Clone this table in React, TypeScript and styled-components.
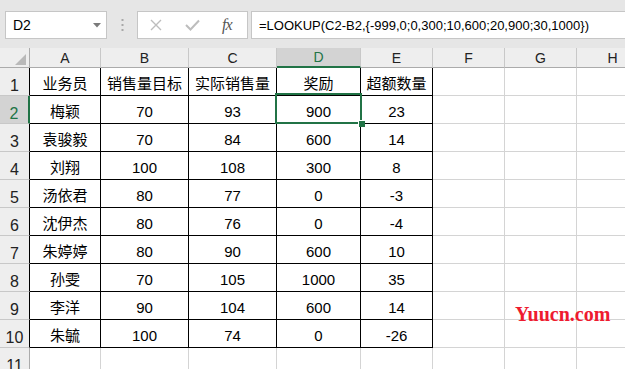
import styled, { createGlobalStyle } from "styled-components";

const GlobalStyle = createGlobalStyle`
  body {
    margin: 0;
    background: #ffffff;
    overflow: hidden;
  }
`;

const Window = styled.div`
  position: relative;
  width: 625px;
  height: 369px;
  overflow: hidden;
  font-family: "Liberation Sans", "Noto Sans CJK SC", sans-serif;
  color: #000;
`;

const FormulaBar = styled.div`
  display: flex;
  align-items: flex-start;
  height: 48px;
  box-sizing: border-box;
  padding: 11px 0 0 5px;
  background: #e6e6e6;
`;

const Field = styled.div`
  display: flex;
  align-items: center;
  height: 28px;
  box-sizing: border-box;
  background: #fff;
  border: 1px solid #c6c6c6;
`;

const NameBox = styled(Field)`
  width: 102px;
  justify-content: space-between;
  padding: 0 5px 0 7px;
  font-size: 14px;
`;

const Grip = styled.div`
  display: flex;
  justify-content: center;
  align-items: center;
  width: 30px;
  height: 28px;
`;

const FxButtons = styled(Field)`
  width: 111px;
  padding: 0 0 0 12px;
`;

const FxIcon = styled.span`
  font-family: "Liberation Serif", serif;
  font-style: italic;
  font-size: 16px;
  color: #555;
  margin-left: 22px;
  letter-spacing: -1px;
`;

const FormulaInput = styled(Field)`
  flex: 1;
  margin-left: 3px;
  border-right: 0;
  padding-left: 7px;
  font-size: 13px;
  white-space: nowrap;
`;

const Sheet = styled.div`
  position: relative;
  display: grid;
  grid-template-columns: 30px 71px 88px 88px 84px 72px 72px 72px 72px;
  grid-template-rows: 20px repeat(11, 28px);
  width: 648px;
`;

const Corner = styled.div`
  display: flex;
  align-items: flex-end;
  justify-content: flex-end;
  padding: 0 3px 2px 0;
  box-sizing: border-box;
  background: #eeeeee;
  border-right: 1px solid #ababab;
  border-bottom: 1px solid #ababab;
`;

const ColHead = styled.div<{ $active?: boolean }>`
  display: flex;
  justify-content: center;
  align-items: flex-end;
  box-sizing: border-box;
  font-size: 14px;
  line-height: 17px;
  background: ${(p) => (p.$active ? "#d3d3d3" : "#eeeeee")};
  color: ${(p) => (p.$active ? "#217346" : "#222")};
  border-right: 1px solid #c8c8c8;
  border-bottom: ${(p) => (p.$active ? "2px solid #217346" : "1px solid #ababab")};
`;

const RowHead = styled.div<{ $active?: boolean; $boxed?: boolean }>`
  display: flex;
  justify-content: center;
  align-items: flex-end;
  box-sizing: border-box;
  font-size: 16px;
  line-height: 19px;
  background: ${(p) => (p.$active ? "#d3d3d3" : "#eeeeee")};
  color: ${(p) => (p.$active ? "#217346" : "#222")};
  border-bottom: 1px solid #c8c8c8;
  border-right: ${(p) =>
    p.$active ? "2px solid #217346" : p.$boxed ? "1px solid #000" : "1px solid #ababab"};
`;

const Cell = styled.div<{ $boxed?: boolean }>`
  box-sizing: border-box;
  text-align: center;
  font-size: 15px;
  line-height: 21px;
  padding-top: 5px;
  border-right: 1px solid ${(p) => (p.$boxed ? "#000" : "#d4d4d4")};
  border-bottom: 1px solid ${(p) => (p.$boxed ? "#000" : "#d4d4d4")};
`;

const Selection = styled.div`
  position: absolute;
  left: 275px;
  top: 45px;
  width: 87px;
  height: 31px;
  box-sizing: border-box;
  border: 2px solid #217346;
  pointer-events: none;
`;

const FillHandle = styled.div`
  position: absolute;
  right: -5px;
  bottom: -5px;
  width: 6px;
  height: 6px;
  background: #217346;
  border: 1px solid #fff;
  border-width: 1px 0 0 1px;
`;

const Watermark = styled.div`
  position: absolute;
  left: 515px;
  top: 303px;
  font-family: "Liberation Serif", serif;
  font-weight: bold;
  font-size: 20px;
  color: #ee1b2f;
`;

const columns = ["A", "B", "C", "D", "E", "F", "G", "H"];

const rows = [
  ["业务员", "销售量目标", "实际销售量", "奖励", "超额数量"],
  ["梅颖", "70", "93", "900", "23"],
  ["袁骏毅", "70", "84", "600", "14"],
  ["刘翔", "100", "108", "300", "8"],
  ["汤依君", "80", "77", "0", "-3"],
  ["沈伊杰", "80", "76", "0", "-4"],
  ["朱婷婷", "80", "90", "600", "10"],
  ["孙雯", "70", "105", "1000", "35"],
  ["李洋", "90", "104", "600", "14"],
  ["朱毓", "100", "74", "0", "-26"],
  [],
];

export default function App() {
  return (
    <Window>
      <GlobalStyle />
      <FormulaBar>
        <NameBox>
          <span>D2</span>
          <svg width="8" height="5" viewBox="0 0 8 5">
            <polygon points="0,0 8,0 4,4.5" fill="#7a7a7a" />
          </svg>
        </NameBox>
        <Grip>
          <svg width="3" height="12" viewBox="0 0 3 12">
            <rect x="0.5" y="0" width="2" height="2" fill="#a8a8a8" />
            <rect x="0.5" y="5" width="2" height="2" fill="#a8a8a8" />
            <rect x="0.5" y="10" width="2" height="2" fill="#a8a8a8" />
          </svg>
        </Grip>
        <FxButtons>
          <svg width="12" height="12" viewBox="0 0 12 12">
            <path d="M1 1 L11 11 M11 1 L1 11" stroke="#bdbdbd" strokeWidth="1.4" />
          </svg>
          <svg width="15" height="12" viewBox="0 0 15 12" style={{ marginLeft: 23 }}>
            <path d="M1 6 L5.5 10.5 L14 1.5" stroke="#bdbdbd" strokeWidth="2" fill="none" />
          </svg>
          <FxIcon>fx</FxIcon>
        </FxButtons>
        <FormulaInput>=LOOKUP(C2-B2,{"{"}-999,0;0,300;10,600;20,900;30,1000{"}"})</FormulaInput>
      </FormulaBar>
      <Sheet>
        <Corner>
          <svg width="11" height="11" viewBox="0 0 11 11">
            <polygon points="11,0 11,11 0,11" fill="#b9b9b9" />
          </svg>
        </Corner>
        {columns.map((c) => (
          <ColHead key={c} $active={c === "D"}>
            {c}
          </ColHead>
        ))}
        {rows.map((row, r) => {
          const boxed = r < 10;
          return [
            <RowHead key={`h${r}`} $active={r === 1} $boxed={boxed}>
              {r + 1}
            </RowHead>,
            ...columns.map((c, ci) => (
              <Cell key={`${r}-${c}`} $boxed={boxed && ci < 5}>
                {row[ci] ?? ""}
              </Cell>
            )),
          ];
        })}
        <Selection>
          <FillHandle />
        </Selection>
      </Sheet>
      <Watermark>Yuucn.com</Watermark>
    </Window>
  );
}
